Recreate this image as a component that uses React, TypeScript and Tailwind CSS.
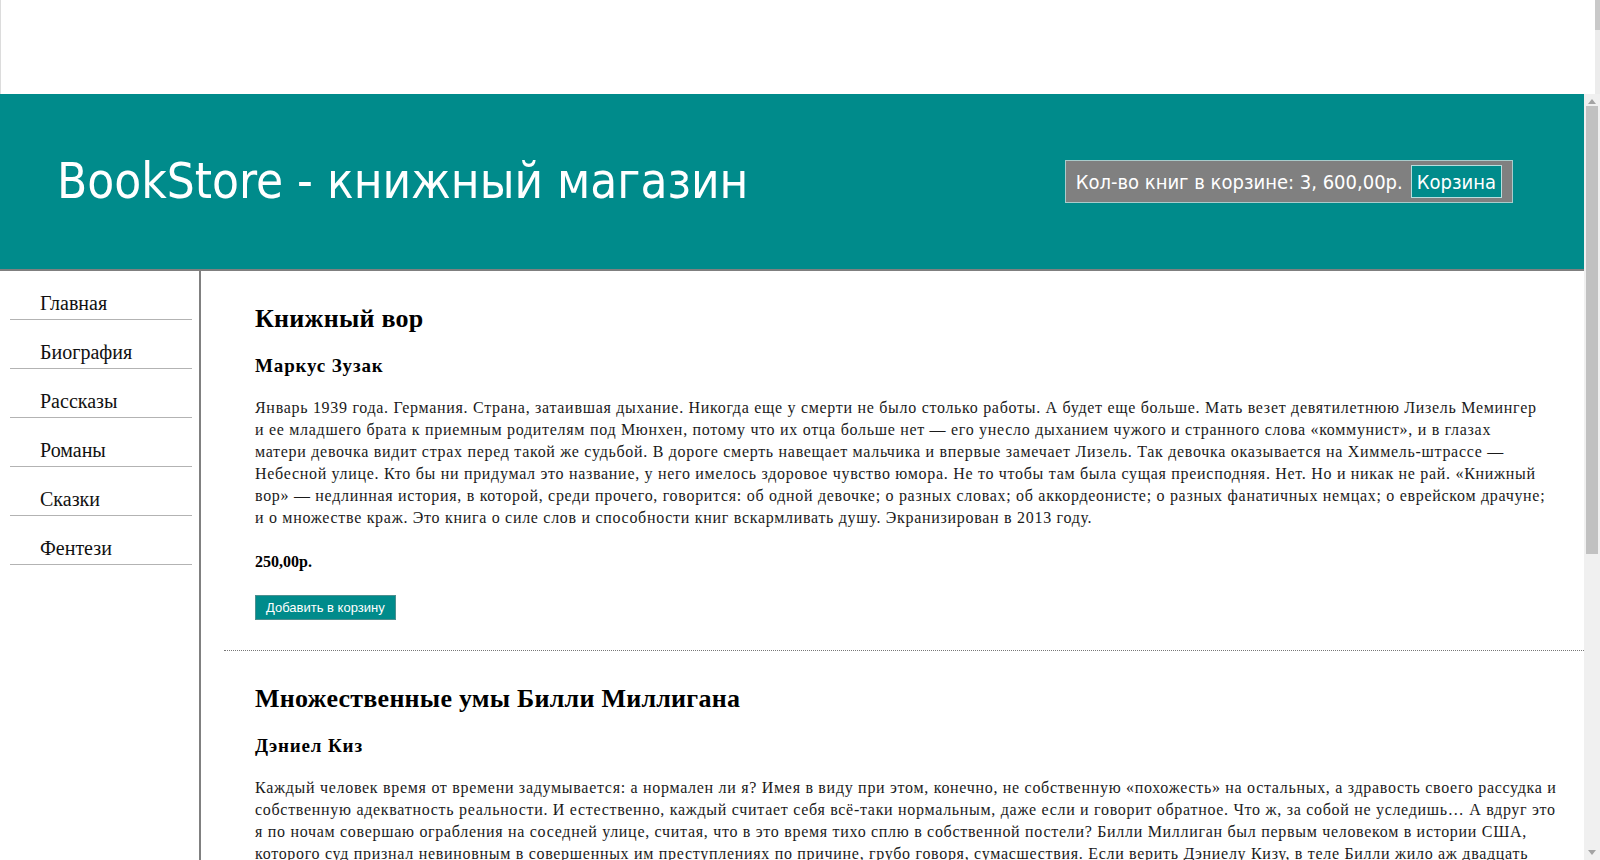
import React from 'react';

const navItems = ['Главная', 'Биография', 'Рассказы', 'Романы', 'Сказки', 'Фентези'];

const books = [
  {
    title: 'Книжный вор',
    author: 'Маркус Зузак',
    lines: [
      'Январь 1939 года. Германия. Страна, затаившая дыхание. Никогда еще у смерти не было столько работы. А будет еще больше. Мать везет девятилетнюю Лизель Мемингер',
      'и ее младшего брата к приемным родителям под Мюнхен, потому что их отца больше нет — его унесло дыханием чужого и странного слова «коммунист», и в глазах',
      'матери девочка видит страх перед такой же судьбой. В дороге смерть навещает мальчика и впервые замечает Лизель. Так девочка оказывается на Химмель-штрассе —',
      'Небесной улице. Кто бы ни придумал это название, у него имелось здоровое чувство юмора. Не то чтобы там была сущая преисподняя. Нет. Но и никак не рай. «Книжный',
      'вор» — недлинная история, в которой, среди прочего, говорится: об одной девочке; о разных словах; об аккордеонисте; о разных фанатичных немцах; о еврейском драчуне;',
      'и о множестве краж. Это книга о силе слов и способности книг вскармливать душу. Экранизирован в 2013 году.',
    ],
    price: '250,00р.',
  },
  {
    title: 'Множественные умы Билли Миллигана',
    author: 'Дэниел Киз',
    lines: [
      'Каждый человек время от времени задумывается: а нормален ли я? Имея в виду при этом, конечно, не собственную «похожесть» на остальных, а здравость своего рассудка и',
      'собственную адекватность реальности. И естественно, каждый считает себя всё-таки нормальным, даже если и говорит обратное. Что ж, за собой не уследишь… А вдруг это',
      'я по ночам совершаю ограбления на соседней улице, считая, что в это время тихо сплю в собственной постели? Билли Миллиган был первым человеком в истории США,',
      'которого суд признал невиновным в совершенных им преступлениях по причине, грубо говоря, сумасшествия. Если верить Дэниелу Кизу, в теле Билли жило аж двадцать',
      'четыре личности.',
    ],
    price: '350,00р.',
  },
];

const Scrollbar = () => (
  <div className="flex w-[16px] flex-col bg-[#f0f0f0]">
    <div className="flex h-[12px] items-center justify-center pt-[2px]">
      <svg width="8" height="5" viewBox="0 0 8 5">
        <path d="M4 0 L8 5 L0 5 Z" fill="#a3a3a3" />
      </svg>
    </div>
    <div className="mx-[2px] h-[448px] bg-[#c1c1c1]"></div>
    <div className="flex-1"></div>
    <div className="flex h-[16px] items-center justify-center">
      <svg width="8" height="5" viewBox="0 0 8 5">
        <path d="M0 0 L8 0 L4 5 Z" fill="#a3a3a3" />
      </svg>
    </div>
  </div>
);

const Header = () => (
  <header className="flex h-[177px] shrink-0 items-center justify-between border-b-2 border-[#7f7f7f] bg-[#008b8b] pl-[57px] pr-[71px] font-['DejaVu_Sans_Condensed','DejaVu_Sans',sans-serif] text-white">
    <h1 className="text-[49px] leading-none">BookStore - книжный магазин</h1>
    <div className="flex h-[43px] items-center gap-[8px] border border-[#a9cccc] bg-[#808080] pl-[10px] pr-[10px]">
      <span className="text-[20px]">Кол-во книг в корзине: 3, 600,00р.</span>
      <a className="flex h-[33px] items-center border border-[#b8dede] bg-[#008b8b] px-[5px] text-[20px]">
        Корзина
      </a>
    </div>
  </header>
);

const Sidebar = () => (
  <nav className="w-[201px] shrink-0 border-r-2 border-[#808080] pl-[10px] font-['Liberation_Serif',serif] text-[20px] text-[#111]">
    {navItems.map((item) => (
      <div
        key={item}
        className="w-[182px] border-b border-[#b3b3b3] pb-[5px] pl-[30px] pt-[22px] leading-[21px]"
      >
        {item}
      </div>
    ))}
  </nav>
);

const Book = ({ book }: { book: (typeof books)[number] }) => (
  <article className="ml-[23px] border-b border-dotted border-[#777] pb-[30px] pl-[31px] pr-[30px] pt-[32px]">
    <h2 className="font-['Liberation_Serif',serif] text-[26px] font-bold leading-[32px] tracking-[0.25px] text-black">
      {book.title}
    </h2>
    <h3 className="mt-[19px] font-['Liberation_Serif',serif] text-[19px] font-bold leading-[24px] tracking-[0.85px] text-black">
      {book.author}
    </h3>
    <p className="mt-[19px] whitespace-nowrap font-['Liberation_Serif',serif] text-[16px] leading-[22px] tracking-[0.7px] text-[#1a1a1a]">
      {book.lines.map((line, i) => (
        <span key={i} className="block">
          {line}
        </span>
      ))}
    </p>
    <div className="mt-[23px] font-['Liberation_Serif',serif] text-[16px] font-bold leading-[20px] text-black">
      {book.price}
    </div>
    <button className="mt-[23px] flex h-[25px] items-center border border-[#4d8f8f] bg-[#008b8b] px-[10px] font-['Liberation_Sans',Arial,sans-serif] text-[13px] text-white">
      Добавить в корзину
    </button>
  </article>
);

export default function App() {
  return (
    <div className="flex h-[860px] w-[1600px] flex-col overflow-hidden bg-white">
      <div className="flex h-[94px] shrink-0">
        <div className="w-px bg-[#dcdcdc]"></div>
        <div className="flex-1 bg-white"></div>
        <div className="flex w-[5px] flex-col bg-[#ececec]">
          <div className="h-[30px] bg-[#c9c9c9]"></div>
        </div>
      </div>
      <div className="flex min-h-0 flex-1">
        <div className="flex min-w-0 flex-1 flex-col overflow-hidden">
          <Header />
          <div className="flex min-h-0 flex-1">
            <Sidebar />
            <main className="min-w-0 flex-1 overflow-hidden">
              {books.map((book) => (
                <Book key={book.title} book={book} />
              ))}
            </main>
          </div>
        </div>
        <Scrollbar />
      </div>
    </div>
  );
}
